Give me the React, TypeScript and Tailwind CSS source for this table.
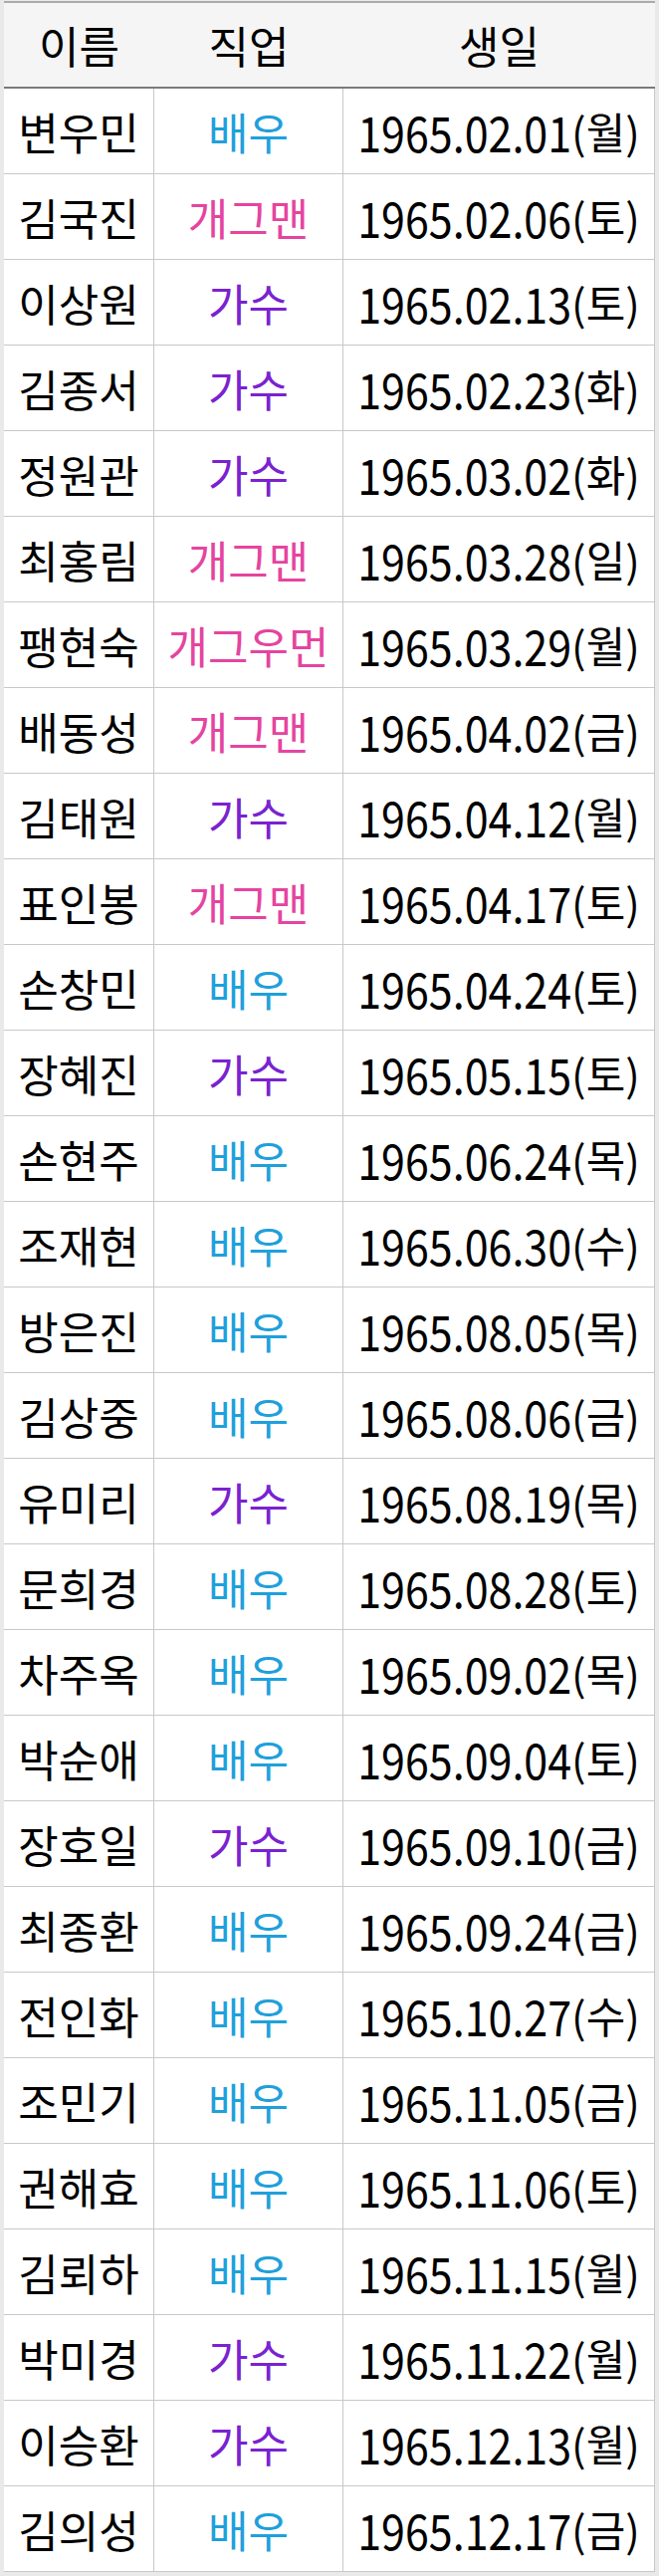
const JOB_COLOR: Record<string, string> = {
  배우: "text-[#1fa0db]",
  개그맨: "text-[#e5449f]",
  개그우먼: "text-[#e5449f]",
  가수: "text-[#7a22d0]",
};

const rows: Array<[string, string, string, string]> = [
  ["변우민", "배우", "1965.02.01", "월"],
  ["김국진", "개그맨", "1965.02.06", "토"],
  ["이상원", "가수", "1965.02.13", "토"],
  ["김종서", "가수", "1965.02.23", "화"],
  ["정원관", "가수", "1965.03.02", "화"],
  ["최홍림", "개그맨", "1965.03.28", "일"],
  ["팽현숙", "개그우먼", "1965.03.29", "월"],
  ["배동성", "개그맨", "1965.04.02", "금"],
  ["김태원", "가수", "1965.04.12", "월"],
  ["표인봉", "개그맨", "1965.04.17", "토"],
  ["손창민", "배우", "1965.04.24", "토"],
  ["장혜진", "가수", "1965.05.15", "토"],
  ["손현주", "배우", "1965.06.24", "목"],
  ["조재현", "배우", "1965.06.30", "수"],
  ["방은진", "배우", "1965.08.05", "목"],
  ["김상중", "배우", "1965.08.06", "금"],
  ["유미리", "가수", "1965.08.19", "목"],
  ["문희경", "배우", "1965.08.28", "토"],
  ["차주옥", "배우", "1965.09.02", "목"],
  ["박순애", "배우", "1965.09.04", "토"],
  ["장호일", "가수", "1965.09.10", "금"],
  ["최종환", "배우", "1965.09.24", "금"],
  ["전인화", "배우", "1965.10.27", "수"],
  ["조민기", "배우", "1965.11.05", "금"],
  ["권해효", "배우", "1965.11.06", "토"],
  ["김뢰하", "배우", "1965.11.15", "월"],
  ["박미경", "가수", "1965.11.22", "월"],
  ["이승환", "가수", "1965.12.13", "월"],
  ["김의성", "배우", "1965.12.17", "금"],
];

export default function App() {
  return (
    <div className="bg-[#e9e9e9] px-1 pt-px pb-1 font-['Noto_Sans_CJK_KR',sans-serif] text-[44px] leading-none text-black">
      <div className="bg-white border-t-2 border-[#ababab]">
        {/* 헤더 */}
        <div className="grid grid-cols-[151px_190px_313px] h-[86px] bg-[#f5f5f5] border-b-2 border-[#7a7a7a]">
          <div className="flex items-center justify-center">이름</div>
          <div className="flex items-center justify-center">직업</div>
          <div className="flex items-center justify-center">생일</div>
        </div>

        {/* 본문 */}
        {rows.map(([name, job, date, day]) => (
          <div
            key={name}
            className="grid grid-cols-[151px_190px_313px] h-[86px] border-b border-[#c8c8c8]"
          >
            <div className="flex items-center justify-center border-r border-[#c8c8c8]">{name}</div>
            <div className={`flex items-center justify-center border-r border-[#c8c8c8] ${JOB_COLOR[job]}`}>
              {job}
            </div>
            <div className="flex items-center justify-center border-r border-[#c8c8c8] text-[43px]">
              <span>
                <span className="inline-block scale-y-[1.15]">{date}</span>({day})
              </span>
            </div>
          </div>
        ))}
      </div>
    </div>
  );
}
